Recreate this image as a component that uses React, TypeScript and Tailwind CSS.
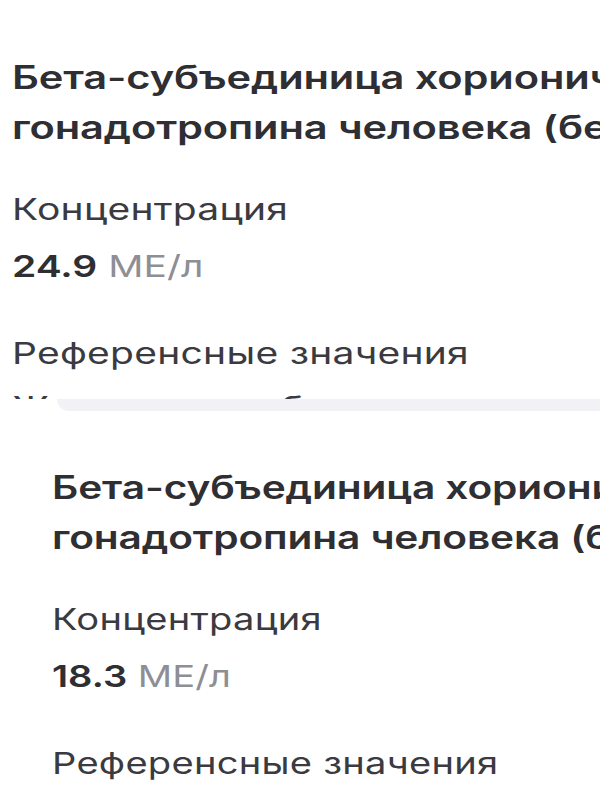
const font = { fontFamily: '"Inter", "Noto Sans", sans-serif' };

type ResultProps = {
    value: string;
};

// скриншот растянут по горизонтали, поэтому текст растягиваем через scale-x
function Result({ value }: ResultProps) {
    return (
        <div className="whitespace-nowrap">
            <div className="text-[32px] leading-[50px] font-semibold text-[#2e2e33] tracking-[-0.1px]">
                <div>Бета-субъединица хорионического</div>
                <div>гонадотропина человека (бета-ХГЧ)</div>
            </div>
            <div className="mt-[36px] text-[30px] leading-[40px] text-[#3a3a40] tracking-[0.2px]">Концентрация</div>
            <div className="mt-[17px] text-[30px] leading-[40px]">
                <span className="font-semibold text-[#2e2e33]">{value}</span>{' '}
                <span className="text-[#8e8e95]">МЕ/л</span>
            </div>
            <div className="mt-[47px] text-[30px] leading-[40px] text-[#3a3a40] tracking-[0.2px]">Референсные значения</div>
        </div>
    );
}

export default function App() {
    return (
        <div className="w-[600px] h-[799px] overflow-hidden bg-white" style={font}>
            {/* верхний скриншот */}
            <div className="pl-[12px] pt-[53px] h-[399px] overflow-hidden">
                <div className="origin-top-left scale-x-[1.3]">
                    <Result value="24.9" />
                    <div className="mt-[14px] text-[30px] leading-[40px] text-[#3a3a40] whitespace-nowrap">
                        Женщины: не беременные
                    </div>
                </div>
            </div>

            {/* нижний скриншот */}
            <div className="ml-[57px] h-[12px] bg-[#f2f2f6] rounded-bl-[18px]" />
            <div className="pl-[52px] pt-[52px]">
                <div className="origin-top-left scale-x-[1.27]">
                    <Result value="18.3" />
                </div>
            </div>
        </div>
    );
}
